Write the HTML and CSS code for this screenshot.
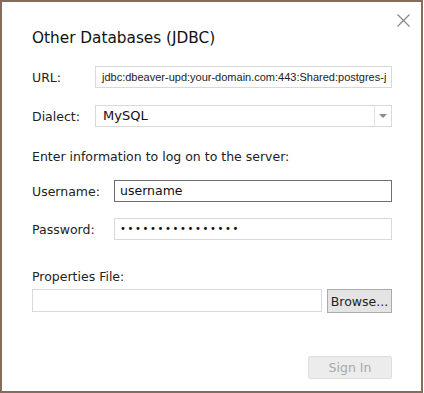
FILE: index.html
```html
<!DOCTYPE html>
<html lang="en">
<head>
    <meta charset="UTF-8">
    <title>Other Databases (JDBC)</title>
    <link rel="stylesheet" href="styles.css">
</head>
<body>
    <div class="dialog">
        <button class="close-btn" aria-label="Close">
            <svg width="13" height="13" viewBox="0 0 13 13">
                <path d="M0.5 0.5 L12.5 12.5 M12.5 0.5 L0.5 12.5" stroke="#8a8a8a" stroke-width="1.3" fill="none"/>
            </svg>
        </button>

        <h1 class="title">Other Databases (JDBC)</h1>

        <div class="conn-grid">
            <label class="field-label">URL:</label>
            <div class="text-box url-box">jdbc:dbeaver-upd:your-domain.com:443:Shared:postgres-j</div>

            <label class="field-label">Dialect:</label>
            <div class="text-box select-box">
                <span class="select-value">MySQL</span>
                <span class="select-arrow"></span>
            </div>
        </div>

        <p class="hint">Enter information to log on to the server:</p>

        <div class="login-grid">
            <label class="field-label">Username:</label>
            <div class="text-box focused">username</div>

            <label class="field-label">Password:</label>
            <div class="text-box dots">&bull;&bull;&bull;&bull;&bull;&bull;&bull;&bull;&bull;&bull;&bull;&bull;&bull;&bull;&bull;&bull;</div>
        </div>

        <p class="props-label">Properties File:</p>
        <div class="file-row">
            <div class="text-box file-box"></div>
            <button class="browse-btn">Browse...</button>
        </div>

        <div class="footer">
            <button class="sign-in" disabled>Sign In</button>
        </div>
    </div>
</body>
</html>
```

FILE: styles.css
```css
body {
    margin: 0;
    background: #ffffff;
    font-family: 'DejaVu Sans', sans-serif;
    color: #1a1a1a;
}

.dialog {
    position: relative;
    width: 360px;
    height: 363px;
    padding: 26px 29px 0 30px;
    border: 2px solid #846d5f;
    background: #ffffff;
}

.close-btn {
    position: absolute;
    top: 12px;
    right: 11px;
    padding: 0;
    border: none;
    background: none;
    line-height: 0;
}

.title {
    margin: 0;
    font-size: 15.3px;
    font-weight: normal;
    line-height: 20px;
    color: #111;
}

.field-label {
    font-size: 12.5px;
    color: #222;
}

.conn-grid {
    display: grid;
    grid-template-columns: 63px 1fr;
    row-gap: 17px;
    align-items: center;
    margin-top: 18px;
}

.login-grid {
    display: grid;
    grid-template-columns: 82px 1fr;
    row-gap: 16px;
    align-items: center;
    margin-top: 15px;
}

.text-box {
    box-sizing: border-box;
    height: 22px;
    border: 1px solid #d9d9d9;
    padding: 0 5px;
    font-size: 12.5px;
    line-height: 20px;
    color: #111;
    white-space: nowrap;
    overflow: hidden;
}

.url-box {
    padding-left: 6px;
    font-family: 'Liberation Sans', Arial, sans-serif;
    font-size: 11px;
    color: #222;
}

.select-box {
    display: flex;
    padding: 0;
}
.select-value {
    flex: 1;
    padding-left: 7px;
    font-size: 13px;
}
.select-arrow {
    position: relative;
    width: 16px;
    border-left: 1px solid #e2e2e2;
}
.select-arrow::after {
    content: "";
    position: absolute;
    left: 4px;
    top: 8px;
    border-left: 4px solid transparent;
    border-right: 4px solid transparent;
    border-top: 4px solid #8c8c8c;
}

.focused {
    border-color: #6e6e6e;
}

.dots {
    font-size: 10px;
    letter-spacing: 1.6px;
}

.hint {
    margin: 22px 0 0;
    font-size: 12.5px;
    line-height: 16px;
    color: #222;
}

.props-label {
    margin: 29px 0 0;
    font-size: 12.5px;
    line-height: 16px;
    color: #222;
}

.file-row {
    display: flex;
    gap: 5px;
    margin-top: 4px;
}
.file-box {
    flex: 1;
    height: 23px;
}
.browse-btn {
    width: 65px;
    height: 24px;
    padding: 0;
    border: 1px solid #aaaaaa;
    background: #e4e4e4;
    font-family: 'DejaVu Sans', sans-serif;
    font-size: 12.5px;
    color: #222;
}

.footer {
    display: flex;
    justify-content: flex-end;
    margin-top: 43px;
}
.sign-in {
    width: 84px;
    height: 23px;
    padding: 0;
    border: 1px solid #dedede;
    border-radius: 2px;
    background: #ececec;
    font-family: 'DejaVu Sans', sans-serif;
    font-size: 12.5px;
    color: #a8a8a8;
}
```
